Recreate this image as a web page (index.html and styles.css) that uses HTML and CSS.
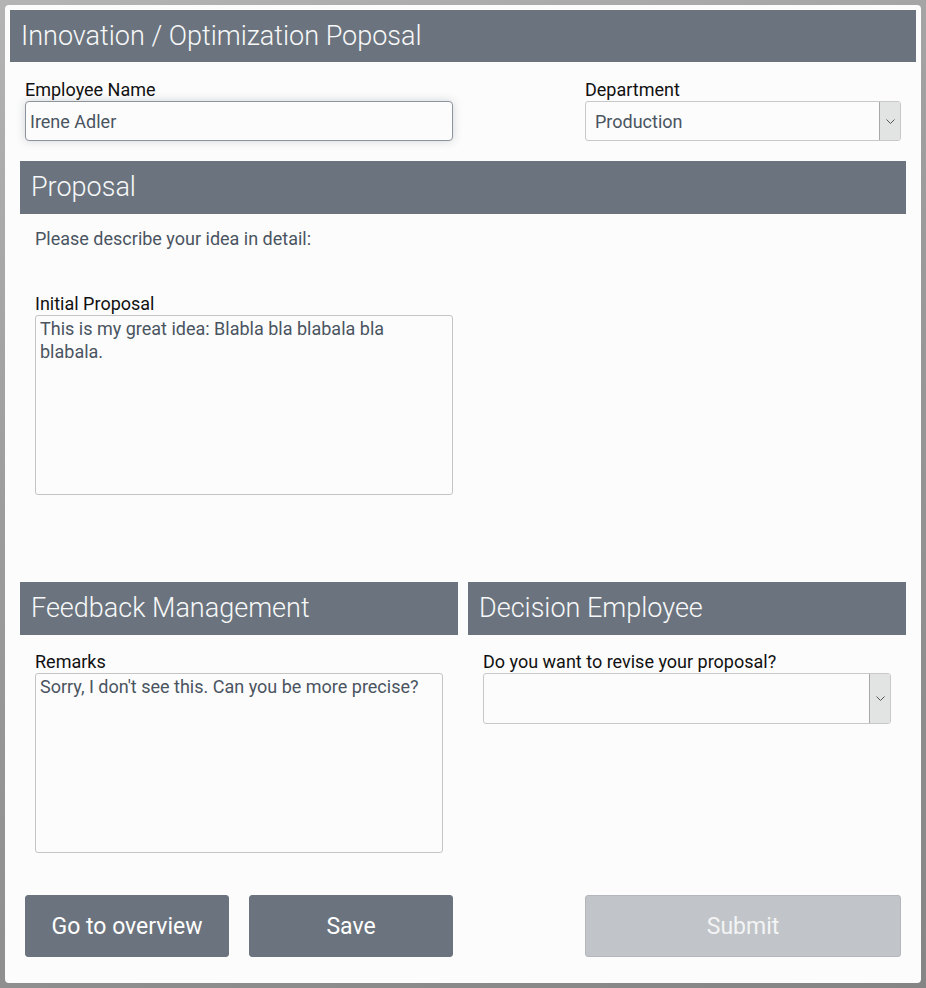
FILE: index.html
```html
<!DOCTYPE html>
<html lang="en">
<head>
  <meta charset="UTF-8" />
  <meta name="viewport" content="width=device-width, initial-scale=1.0"/>
  <title>Innovation / Optimization Proposal</title>
  <link rel="stylesheet" href="styles.css">
</head>
<body>
  <div class="card">
    <h1 class="page-title">Innovation / Optimization Poposal</h1>

    <!-- Who is filing the proposal -->
    <div class="top-row">
      <div class="field field-name">
        <label for="employee">Employee Name</label>
        <input type="text" id="employee" class="text-input" value="Irene Adler" autofocus>
      </div>
      <div class="field field-dept">
        <label for="department">Department</label>
        <div class="select-box">
          <select id="department">
            <option>Production</option>
          </select>
          <span class="select-arrow">
            <svg width="9" height="5" viewBox="0 0 9 5"><path d="M0.5 0.5 L4.5 4.5 L8.5 0.5" fill="none" stroke="#555" stroke-width="1"/></svg>
          </span>
        </div>
      </div>
    </div>

    <!-- Proposal text -->
    <section class="section">
      <h2 class="section-title">Proposal</h2>
      <div class="section-body">
        <p class="hint">Please describe your idea in detail:</p>
        <label for="proposal" class="label-spaced">Initial Proposal</label>
        <textarea id="proposal" class="area area-wide">This is my great idea: Blabla bla blabala bla blabala.</textarea>
      </div>
    </section>

    <div class="split">
      <section class="section">
        <h2 class="section-title">Feedback Management</h2>
        <div class="section-body body-tight">
          <label for="remarks">Remarks</label>
          <textarea id="remarks" class="area">Sorry, I don't see this. Can you be more precise?</textarea>
        </div>
      </section>
      <section class="section">
        <h2 class="section-title">Decision Employee</h2>
        <div class="section-body body-tight">
          <label for="revise">Do you want to revise your proposal?</label>
          <div class="select-box select-tall">
            <select id="revise">
              <option></option>
              <option>Yes</option>
              <option>No</option>
            </select>
            <span class="select-arrow">
              <svg width="9" height="5" viewBox="0 0 9 5"><path d="M0.5 0.5 L4.5 4.5 L8.5 0.5" fill="none" stroke="#555" stroke-width="1"/></svg>
            </span>
          </div>
        </div>
      </section>
    </div>

    <!-- Actions -->
    <div class="actions">
      <div class="btn-group">
        <button class="btn">Go to overview</button>
        <button class="btn">Save</button>
      </div>
      <button class="btn btn-submit" disabled>Submit</button>
    </div>
  </div>
</body>
</html>
```

FILE: styles.css
```css
* {
  box-sizing: border-box;
  margin: 0;
  padding: 0;
}
body {
  font-family: Roboto, 'Noto Sans', sans-serif;
  background: linear-gradient(160deg, #b4b4b4 0%, #9c9c9c 40%, #858585 100%);
  padding: 5px;
  min-height: 100vh;
}

.card {
  background: #fcfcfc;
  border-radius: 4px;
  height: 978px;
  padding: 5px;
}

/* Header bars */
.page-title,
.section-title {
  background: #6b747e;
  color: #f7f8f9;
  font-weight: 300;
  font-size: 27px;
  padding-left: 11px;
}
.page-title {
  height: 52px;
  line-height: 52px;
}
.section-title {
  height: 53px;
  line-height: 53px;
}

label {
  display: block;
  font-size: 18px;
  line-height: 22px;
  color: #111;
}

/* Top row */
.top-row {
  display: flex;
  justify-content: space-between;
  padding: 0 15px;
  margin-top: 17px;
}
.field-name { width: 428px; }
.field-dept { width: 316px; }

.text-input {
  width: 100%;
  height: 40px;
  border: 1px solid #8d949c;
  border-radius: 4px;
  padding: 0 4px;
  font-family: inherit;
  font-size: 18px;
  color: #4a5461;
  background: #fcfcfc;
  box-shadow: 0 0 10px rgba(60, 70, 80, 0.22);
  outline: none;
}

/* Select with a boxed arrow */
.select-box {
  display: flex;
  height: 40px;
  border: 1px solid #c8c8c8;
  border-radius: 3px;
  background: #fcfcfc;
  overflow: hidden;
}
.select-box select {
  flex: 1;
  border: none;
  background: transparent;
  appearance: none;
  -webkit-appearance: none;
  font-family: inherit;
  font-size: 18px;
  color: #4a5461;
  padding-left: 9px;
  outline: none;
}
.select-arrow {
  width: 21px;
  background: #e2e3e3;
  border-left: 1px solid #a8a8a8;
  display: flex;
  align-items: center;
  justify-content: center;
}
.select-tall { height: 51px; }

/* Sections */
.section {
  margin: 20px 10px 0;
}
.section-body {
  padding: 14px 15px 0;
}
.body-tight {
  padding-top: 16px;
}
.hint {
  font-size: 18px;
  line-height: 22px;
  color: #4a5461;
}
.label-spaced {
  margin-top: 43px;
}
.area {
  display: block;
  width: 100%;
  height: 180px;
  border: 1px solid #c4c4c4;
  border-radius: 3px;
  background: #fcfcfc;
  padding: 1px 4px;
  font-family: inherit;
  font-size: 18px;
  line-height: 23px;
  color: #4a5461;
  resize: none;
  outline: none;
}
.area-wide {
  width: 418px;
}

.split {
  display: flex;
  gap: 10px;
  margin: 87px 10px 0;
}
.split .section {
  flex: 1;
  margin: 0;
}

/* Buttons */
.actions {
  display: flex;
  justify-content: space-between;
  padding: 0 15px;
  margin-top: 42px;
}
.btn-group {
  display: flex;
  gap: 20px;
}
.btn {
  width: 204px;
  height: 62px;
  border: 1px solid #6b747e;
  border-radius: 3px;
  background: #6b747e;
  color: #fff;
  font-family: inherit;
  font-size: 23px;
  cursor: pointer;
}
.btn-submit {
  width: 316px;
  background: #c1c4c8;
  border-color: #b3b7bc;
  color: #f3f4f5;
  cursor: default;
}
```
